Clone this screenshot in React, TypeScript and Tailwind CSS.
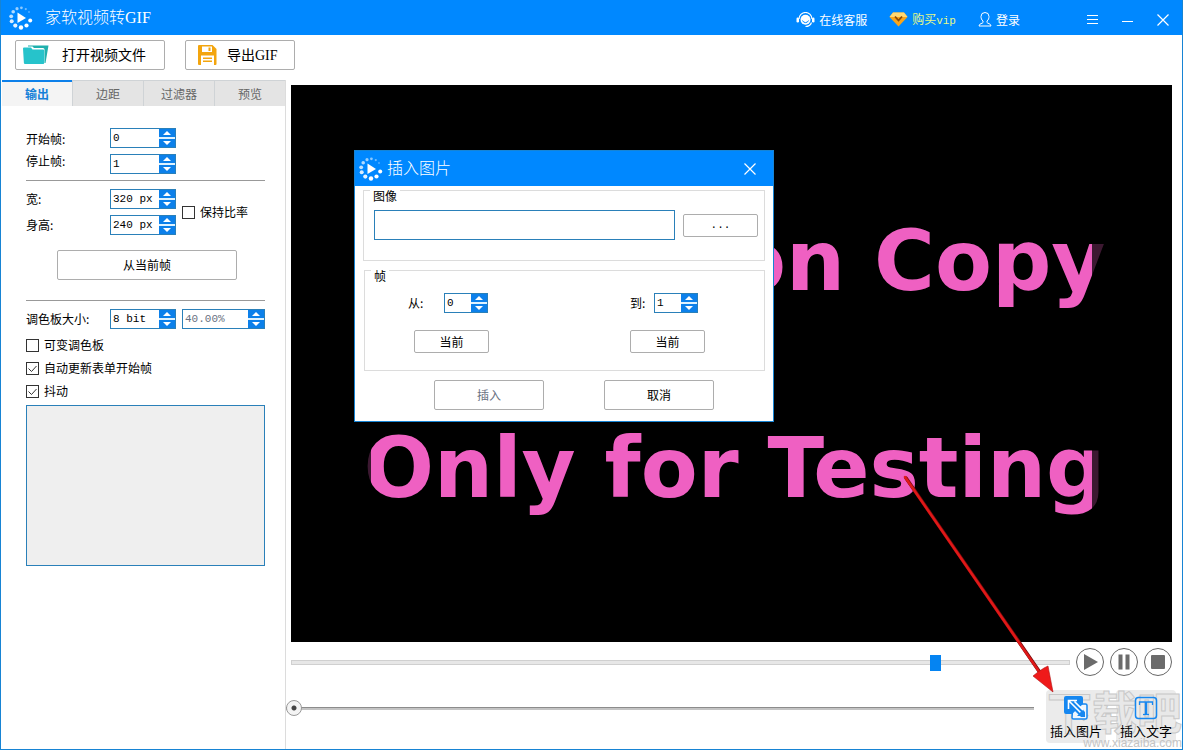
import { useId } from 'react';
import type { ReactNode } from 'react';
import { clsx } from 'clsx';

const tabs = ['输出', '边距', '过滤器', '预览'];

function LogoIcon() {
  return (
    <svg width="24" height="24" viewBox="0 0 24 24" fill="#fff" aria-hidden="true">
      <path d="M8.500 6.500L17 12l-8.500 5z" />
      <circle cx="12" cy="21.5" r="2.2" />
      <circle cx="17.5" cy="19.5" r="2.1" />
      <circle cx="21.2" cy="14.5" r="2" />
      <circle cx="6.3" cy="19.6" r="2.1" opacity=".9" />
      <circle cx="2.7" cy="15.2" r="2" opacity=".85" />
      <circle cx="2.2" cy="10.3" r="1.9" opacity=".75" />
      <circle cx="4.2" cy="5.8" r="1.8" opacity=".7" />
      <circle cx="8" cy="2.7" r="1.6" opacity=".6" />
      <circle cx="12.4" cy="1.8" r="1.4" opacity=".55" />
      <circle cx="16.8" cy="3.1" r="1.1" opacity=".45" />
      <circle cx="20" cy="6" r=".9" opacity=".35" />
    </svg>
  );
}

function ServiceIcon() {
  return (
    <svg width="19" height="16" viewBox="0 0 19 16" aria-hidden="true">
      <path d="M3 7a6.5 6.5 0 0 1 13 0M15.5 10.5c-1 3-3.500 4-6 4" fill="none" stroke="#fff" strokeWidth="1.2" />
      <rect x=".5" y="5.500" width="2.500" height="5" rx="1.200" fill="#fff" />
      <rect x="16" y="5.500" width="2.500" height="5" rx="1.200" fill="#fff" />
      <circle cx="9.500" cy="7.800" r="5" fill="#fff" />
      <path d="M6.500 8.500a3.200 3.200 0 0 0 6 0" fill="none" stroke="#0088ff" strokeWidth="1" />
    </svg>
  );
}

function DiamondIcon() {
  return (
    <svg width="19" height="15" viewBox="0 0 19 15" aria-hidden="true">
      <path d="M4 .5h11L18.500 5 9.500 14.500.5 5z" fill="#f9a51a" />
      <path d="M4 .5h11L18.500 5H.5z" fill="#ffd873" />
      <path d="M6 4.500l3.500 4 3.500-4" fill="none" stroke="#8a4a08" strokeWidth="1.800" />
    </svg>
  );
}

function UserIcon() {
  return (
    <svg width="14" height="15" viewBox="0 0 14 15" fill="none" stroke="#fff" aria-hidden="true">
      <path d="M5 9C3.500 8 3 6 3 4.500a4 4 0 0 1 8 0C11 6 10.500 8 9 9v1.500c0 1 4 .8 4 3.500H1c0-2.700 4-2.500 4-3.500z" />
    </svg>
  );
}

function CloseIcon() {
  return (
    <svg width="12" height="12" viewBox="0 0 12 12" stroke="#fff" strokeWidth="1.2" aria-hidden="true">
      <path d="M.5.5l11 11M11.500.5l-11 11" />
    </svg>
  );
}

function FolderIcon() {
  return (
    <svg width="26" height="20" viewBox="0 0 26 20" aria-hidden="true">
      <path d="M5 .5h20.500L22.500 18h-1V4.500q0-1.500-1.500-1.500H11L9.500 1.500H5z" fill="#1fb0ad" />
      <path d="M0 3.500q0-1 1-1h7l1.500 2H20q1.200 0 1.200 1.200V18q0 1-1 1H2q-1 0-1.100-1z" fill="#26c3cb" />
    </svg>
  );
}

function SaveIcon() {
  return (
    <svg width="19" height="20" viewBox="0 0 19 20" aria-hidden="true">
      <path d="M0 1q0-1 1-1h13.500L18.500 4v15q0 1-1 1H1q-1 0-1-1z" fill="#f3a50e" />
      <path d="M4 1.500h10V7H4zM3 10.500h13V20H3z" fill="#fff" />
      <path d="M10.500 2.500h2V6h-2zM5 12.500h9v1.500H5zM5 15.500h9V17H5z" fill="#f3a50e" />
    </svg>
  );
}

interface SpinProps {
  id?: string;
  value: string;
  label?: string;
  className?: string;
  disabled?: boolean;
}

function SpinBox({ id, value, label, className, disabled }: SpinProps) {
  return (
    <div className={clsx('flex h-5 border border-[#2a80b9] bg-white', className)}>
      <input
        id={id}
        type="text"
        aria-label={label}
        defaultValue={value}
        disabled={disabled}
        className="w-0 min-w-0 flex-1 pl-0.5 font-['Liberation_Mono','Noto_Sans_CJK_SC',monospace] text-[11px] text-black outline-none disabled:text-gray-500"
      />
      <div className="flex w-4 flex-col justify-between bg-[#dff3ff]">
        <button type="button" aria-label="增加" className="flex h-2 items-center justify-center bg-[#0c80ea]">
          <svg width="8" height="4" viewBox="0 0 8 4" fill="#fff"><path d="M4 0l4 4H0z" /></svg>
        </button>
        <button type="button" aria-label="减少" className="flex h-2 items-center justify-center bg-[#0c80ea]">
          <svg width="8" height="4" viewBox="0 0 8 4" fill="#fff"><path d="M4 4L0 0h8z" /></svg>
        </button>
      </div>
    </div>
  );
}

function CheckBox({ children, checked }: { children: ReactNode; checked?: boolean }) {
  return (
    <label className="flex items-center gap-[5px] whitespace-nowrap">
      <span className="grid size-[13px]">
        <input
          type="checkbox"
          defaultChecked={checked}
          className="peer col-start-1 row-start-1 size-[13px] appearance-none border border-[#333] bg-white"
        />
        <svg
          viewBox="0 0 13 13"
          fill="none"
          stroke="#333"
          className="pointer-events-none invisible col-start-1 row-start-1 size-[13px] peer-checked:visible"
        >
          <path d="M2.500 6.500l3 3 5-5.500" />
        </svg>
      </span>
      {children}
    </label>
  );
}

function PlainButton({ children, className, disabled }: { children: ReactNode; className?: string; disabled?: boolean }) {
  return (
    <button
      type="button"
      disabled={disabled}
      className={clsx(
        'flex items-center rounded-xs border border-[#adadad] bg-white disabled:text-gray-500',
        className,
      )}
    >
      {children}
    </button>
  );
}

function TitleBar() {
  return (
    <header className="flex h-[35px] items-center bg-[#0088ff] pl-2 text-white">
      <LogoIcon />
      <h1 className="ml-3 font-['Liberation_Serif','Noto_Sans_CJK_SC',serif] text-base font-light">家软视频转GIF</h1>
      <nav className="mr-[55px] ml-auto flex items-center gap-[22px] pt-1">
        <a href="#service" className="flex items-center gap-1"><ServiceIcon />在线客服</a>
        <a href="#vip" className="flex items-center gap-1 text-[#e4f98a]">
          <DiamondIcon />
          <span>购买<span className="font-['Liberation_Mono',monospace] text-[11px]">vip</span></span>
        </a>
        <a href="#login" className="flex items-center gap-1"><UserIcon />登录</a>
      </nav>
      <div className="flex pt-1 pr-0.5">
        <button type="button" aria-label="菜单" className="flex h-6 w-[35px] items-center justify-center">
          <svg width="11" height="9" viewBox="0 0 11 9" stroke="#fff"><path d="M0 .5h11M0 4.500h11M0 8.500h11" /></svg>
        </button>
        <button type="button" aria-label="最小化" className="flex h-6 w-[35px] items-center justify-center pt-1">
          <svg width="11" height="1" viewBox="0 0 11 1" fill="#fff"><path d="M0 0h11v1H0z" /></svg>
        </button>
        <button type="button" aria-label="关闭" className="flex h-6 w-[35px] items-center justify-center">
          <CloseIcon />
        </button>
      </div>
    </header>
  );
}

function Sidebar() {
  const id = useId();
  return (
    <aside className="flex w-[285px] shrink-0 flex-col border-r border-[#dcdcdc]">
      <div role="tablist" className="flex h-[26px] pl-px">
        {tabs.map((tab, i) => (
          <button
            key={tab}
            type="button"
            role="tab"
            aria-selected={i === 0}
            className={clsx(
              'flex-1 border-t',
              i === 0
                ? 'border-t-2 border-[#0c80ea] bg-[#f4f4f4] font-bold text-[#1580d8]'
                : 'border-l border-[#cfd3d6] bg-[#e4e4e4] text-[#666]',
            )}
          >
            {tab}
          </button>
        ))}
      </div>

      <form className="flex flex-col pt-[22px] pr-5 pl-[25px]">
        <div className="flex">
          <div className="flex w-[84px] flex-col leading-[22px]">
            <label htmlFor={`${id}-start`}>开始帧:</label>
            <label htmlFor={`${id}-stop`}>停止帧:</label>
          </div>
          <div className="flex flex-col gap-1.5">
            <SpinBox id={`${id}-start`} value="0" className="w-[66px]" />
            <SpinBox id={`${id}-stop`} value="1" className="w-[66px]" />
          </div>
        </div>

        <hr className="mt-1.5 border-[#999]" />

        <div className="mt-2 flex items-center">
          <div className="flex w-[84px] flex-col gap-1.5 leading-5">
            <label htmlFor={`${id}-width`}>宽:</label>
            <label htmlFor={`${id}-height`}>身高:</label>
          </div>
          <div className="mr-1.5 flex flex-col gap-1.5">
            <SpinBox id={`${id}-width`} value="320 px" className="w-[66px]" />
            <SpinBox id={`${id}-height`} value="240 px" className="w-[66px]" />
          </div>
          <CheckBox>保持比率</CheckBox>
        </div>

        <PlainButton className="mt-[15px] ml-[31px] h-[30px] w-[180px] justify-center">从当前帧</PlainButton>

        <hr className="mt-5 border-[#999]" />

        <div className="mt-2 flex items-center">
          <label htmlFor={`${id}-palette`} className="w-[84px]">调色板大小:</label>
          <SpinBox id={`${id}-palette`} value="8 bit" className="w-[66px]" />
          <SpinBox value="40.00%" label="抖动比例" disabled className="ml-1.5 w-[83px]" />
        </div>

        <div className="mt-1.5 flex flex-col gap-[3px] leading-5">
          <CheckBox>可变调色板</CheckBox>
          <CheckBox checked>自动更新表单开始帧</CheckBox>
          <CheckBox checked>抖动</CheckBox>
        </div>

        <div className="mt-1 h-[161px] border border-[#2a80b9] bg-[#efefef]" />
      </form>
    </aside>
  );
}

function FrameField({ label, value, labelClass, buttonClass }: { label: string; value: string; labelClass: string; buttonClass?: string }) {
  const id = useId();
  return (
    <div>
      <div className="flex items-center">
        <label htmlFor={id} className={labelClass}>{label}</label>
        <SpinBox id={id} value={value} className="w-11" />
      </div>
      <PlainButton className={clsx('mt-[17px] h-[23px] w-[75px] justify-center', buttonClass)}>当前</PlainButton>
    </div>
  );
}

function InsertDialog() {
  return (
    <section role="dialog" aria-label="插入图片" className="absolute top-[65px] left-[63px] w-[420px] border border-[#1784d4] bg-white pb-[11px]">
      <header className="flex h-[35px] items-center bg-[#0088ff] pr-[17px] pl-1 text-white">
        <LogoIcon />
        <h2 className="ml-1 pb-1 text-base font-light">插入图片</h2>
        <button type="button" aria-label="关闭" className="ml-auto"><CloseIcon /></button>
      </header>

      <fieldset className="mx-2 mt-1 h-[71px] border border-[#dcdcdc]">
        <legend className="ml-1.5 h-px bg-white px-[3px] leading-3">图像</legend>
        <div className="flex items-center gap-2 pt-[19px] pl-2.5">
          <input type="text" aria-label="图像" className="h-[30px] w-[301px] border border-[#2a80b9] px-1 outline-none" />
          <PlainButton className="h-[23px] w-[75px] justify-center font-['Liberation_Mono',monospace] text-[11px]">...</PlainButton>
        </div>
      </fieldset>

      <fieldset className="mt-[9px] mr-2 ml-[9px] h-[101px] border border-[#dcdcdc]">
        <legend className="ml-1.5 h-px bg-white px-[3px] leading-3">帧</legend>
        <div className="flex justify-between pt-[22px] pr-[59px] pl-[43px]">
          <FrameField label="从:" value="0" labelClass="w-9" buttonClass="ml-1.5" />
          <FrameField label="到:" value="1" labelClass="w-6" />
        </div>
      </fieldset>

      <div className="mt-[9px] flex justify-center gap-[60px] pl-5">
        <PlainButton disabled className="h-[30px] w-[110px] justify-center">插入</PlainButton>
        <PlainButton className="h-[30px] w-[110px] justify-center">取消</PlainButton>
      </div>
    </section>
  );
}

function Arrow() {
  return (
    <svg width="170" height="240" viewBox="0 0 170 240" className="pointer-events-none absolute right-[108px] -bottom-16 z-10" aria-hidden="true">
      <path d="M12 12L147 208" stroke="#7a0c0c" strokeWidth="3.500" strokeLinecap="round" />
      <path d="M11 11L146 207" stroke="#e01818" strokeWidth="2.500" strokeLinecap="round" />
      <path d="M159 226l-20-16 5-4 6-4 4-2z" fill="#ef1a1a" stroke="#b01212" strokeWidth=".6" />
    </svg>
  );
}

function VideoArea() {
  return (
    <div className="relative mt-[5px] mr-2.5 ml-[5px] flex min-h-[480px] flex-1 items-center justify-center bg-black pt-1 pl-1.5">
      <div className="relative flex flex-col items-end gap-[107px] font-['DejaVu_Sans',sans-serif] text-[83px] leading-[100px] font-bold whitespace-nowrap text-[#ef60c2]">
        <p>on Copy</p>
        <p>Only for Testing</p>
        <div className="absolute inset-y-0 left-0 w-[7px] bg-black/75" />
        <div className="absolute inset-y-0 right-0 w-[13px] bg-black/75" />
      </div>
      <InsertDialog />
      <Arrow />
    </div>
  );
}

function RoundButton({ label, children }: { label: string; children: ReactNode }) {
  return (
    <button type="button" aria-label={label} className="flex size-7 items-center justify-center rounded-full border border-[#666] bg-white">
      <svg width="18" height="18" viewBox="0 0 18 18" fill="#6b6b6b">{children}</svg>
    </button>
  );
}

function PlayerBar() {
  return (
    <div className="flex h-10 items-center gap-1.5 pr-2.5 pl-[5px]">
      <input
        type="range"
        aria-label="播放进度"
        min={0}
        max={1000}
        defaultValue={833}
        className="h-4 min-w-0 flex-1 appearance-none bg-transparent [&::-webkit-slider-runnable-track]:h-[5px] [&::-webkit-slider-runnable-track]:border [&::-webkit-slider-runnable-track]:border-[#d0d0d0] [&::-webkit-slider-runnable-track]:bg-[#e7e7e7] [&::-webkit-slider-thumb]:-mt-1.5 [&::-webkit-slider-thumb]:h-4 [&::-webkit-slider-thumb]:w-[11px] [&::-webkit-slider-thumb]:appearance-none [&::-webkit-slider-thumb]:bg-[#0584f2]"
      />
      <RoundButton label="播放"><path d="M3 1l14 8-14 8z" /></RoundButton>
      <RoundButton label="暂停"><path d="M3.500 1.500h4v15h-4zM10.500 1.500h4v15h-4z" /></RoundButton>
      <RoundButton label="停止"><rect x="2" y="2" width="14" height="14" rx="1" /></RoundButton>
    </div>
  );
}

function Watermark() {
  return (
    <div className="pointer-events-none absolute right-0 bottom-0 flex flex-col items-end" aria-hidden="true">
      <span className="font-['Noto_Sans_CJK_SC',sans-serif] text-[45px] leading-[52px] font-bold text-[#e8e8e8] [-webkit-text-stroke:1px_#c8c8c8]">下载吧</span>
      <span className="font-['Liberation_Sans',sans-serif] text-xs leading-3 text-[#c4c4c4]">www.xiazaiba.com</span>
    </div>
  );
}

function InsertBar() {
  return (
    <div className="relative flex h-[67px] items-start pt-2 pr-1.5">
      <input
        type="range"
        aria-label="时间轴"
        min={0}
        max={100}
        defaultValue={0}
        className="mt-2.5 mr-3 h-4 min-w-0 flex-1 appearance-none bg-transparent [&::-webkit-slider-runnable-track]:h-[3px] [&::-webkit-slider-runnable-track]:border-t [&::-webkit-slider-runnable-track]:border-[#8c8c8c] [&::-webkit-slider-runnable-track]:bg-[#c4c4c4] [&::-webkit-slider-thumb]:-mt-2 [&::-webkit-slider-thumb]:size-4 [&::-webkit-slider-thumb]:appearance-none [&::-webkit-slider-thumb]:rounded-full [&::-webkit-slider-thumb]:border [&::-webkit-slider-thumb]:border-[#999] [&::-webkit-slider-thumb]:bg-[radial-gradient(circle,#444_2px,#f4f4f4_3px)]"
      />
      <div className="flex gap-2.5 text-[13px]">
        <button type="button" className="flex h-[53px] w-[60px] flex-col items-center rounded-sm bg-[#ebebeb] pt-1.5 leading-[22px] whitespace-nowrap">
          <svg width="24" height="24" viewBox="0 0 24 24" className="relative z-10" aria-hidden="true">
            <path d="M9 8h12.500q1.500 0 1.500 1.500v12q0 1.500-1.500 1.500h-12Q8 23 8 21.500z" fill="#eef6fd" stroke="#1687f0" strokeWidth="1.500" />
            <path d="M2 0h15q2 0 2 2v6L8 18H2q-2 0-2-2V2q0-2 2-2z" fill="#1687f0" />
            <path d="M12 7l9 9v5h-4l-9-9z" fill="#1687f0" />
            <path d="M4.500 13V4.500H13M5 5l11.500 11.500M10.500 5.500l9 9" fill="none" stroke="#fff" strokeWidth="1.600" />
            <path d="M19.500 13.500v6.500h-6.500z" fill="#1687f0" />
          </svg>
          <span className="relative z-10">插入图片</span>
        </button>
        <button type="button" className="flex h-[53px] w-[60px] flex-col items-center rounded-sm bg-[#ebebeb] pt-1.5 leading-[22px] whitespace-nowrap">
          <svg width="24" height="24" viewBox="0 0 24 24" fill="none" stroke="#1687f0" className="relative z-10" aria-hidden="true">
            <rect x="1.500" y="1.500" width="21" height="21" rx="3" strokeWidth="1.500" />
            <path d="M5.500 9V6h13v3" strokeWidth="1.300" />
            <path d="M12 6v12.500" strokeWidth="2.500" />
            <path d="M9 18.500h6" strokeWidth="1.300" />
          </svg>
          <span className="relative z-10">插入文字</span>
        </button>
      </div>
      <Watermark />
    </div>
  );
}

export default function App() {
  return (
    <div className="flex min-h-screen flex-col border-x border-b border-[#1784d4] bg-white font-['Noto_Sans_CJK_SC',sans-serif] text-xs text-black">
      <TitleBar />
      <div className="flex h-[45px] gap-5 pt-[5px] pl-3.5 font-['Liberation_Serif','Noto_Sans_CJK_SC',serif] text-sm">
        <PlainButton className="h-[30px] w-[150px] gap-[13px] pl-[7px]">
          <FolderIcon />
          <span className="pt-0.5">打开视频文件</span>
        </PlainButton>
        <PlainButton className="h-[30px] w-[110px] gap-2.5 pl-3">
          <SaveIcon />
          <span className="pt-0.5">导出GIF</span>
        </PlainButton>
      </div>
      <div className="flex flex-1">
        <Sidebar />
        <main className="flex min-w-0 flex-1 flex-col">
          <VideoArea />
          <PlayerBar />
          <InsertBar />
        </main>
      </div>
    </div>
  );
}
